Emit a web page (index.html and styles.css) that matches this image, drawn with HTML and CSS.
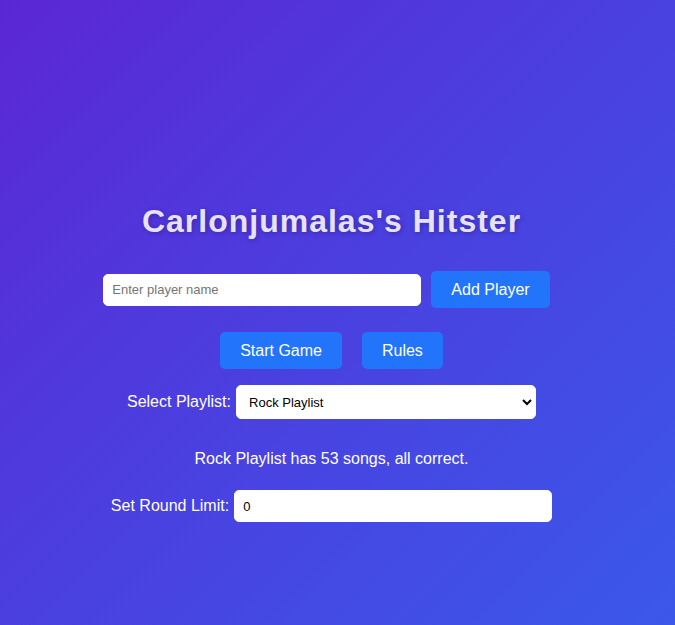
FILE: index.html
```html
<!DOCTYPE html>
<html lang="en">
<head>
<meta charset="utf-8">
<title>Carlonjumalas's Hitster</title>
<link rel="stylesheet" href="styles.css">
</head>
<body>
<div class="page">
  <h1 class="title">Carlonjumalas's Hitster</h1>
  <div class="row row-player">
    <input class="field name-field" type="text" placeholder="Enter player name">
    <button class="btn">Add Player</button>
  </div>
  <div class="row row-actions">
    <button class="btn">Start Game</button>
    <button class="btn">Rules</button>
  </div>
  <div class="row row-playlist">
    <label class="label">Select Playlist:</label>
    <select class="field select-field">
      <option>Rock Playlist</option>
    </select>
  </div>
  <p class="status">Rock Playlist has 53 songs, all correct.</p>
  <div class="row row-limit">
    <label class="label">Set Round Limit:</label>
    <input class="field limit-field" type="number" value="0">
  </div>
</div>
</body>
</html>
```
FILE: styles.css
```css
html, body {
  margin: 0;
  padding: 0;
  height: 100%;
}
body {
  background: linear-gradient(135deg, #5b27d5 0%, #4a40e0 50%, #3b58ea 100%);
  font-family: "Liberation Sans", Arial, sans-serif;
  color: #ffffff;
  overflow: hidden;
}
.page {
  padding: 203px 12px 0 0;
  display: flex;
  flex-direction: column;
  align-items: center;
}
.title {
  margin: 0;
  font-size: 32px;
  line-height: 37px;
  font-weight: bold;
  letter-spacing: 1px;
  color: #e6e2fb;
  text-shadow: 1px 1px 5px rgba(20, 0, 80, 0.35);
}
.row {
  display: flex;
  align-items: center;
  justify-content: center;
}
.row-player { margin-top: 31px; }
.row-actions { margin-top: 24px; }
.row-playlist { margin-top: 16px; }
.row-limit { margin-top: 22px; }
.btn {
  margin: 0 10px;
  padding: 0 20px;
  height: 37px;
  border: none;
  border-radius: 5px;
  background: #2275fb;
  color: #ffffff;
  font-family: "Liberation Sans", Arial, sans-serif;
  font-size: 16px;
}
.field {
  box-sizing: border-box;
  border: 1px solid #ffffff;
  border-radius: 5px;
  background: #ffffff;
  font-family: "Liberation Sans", Arial, sans-serif;
  font-size: 13px;
  color: #000000;
  padding: 0 8px;
  outline: none;
}
.name-field {
  width: 318px;
  height: 32px;
}
.name-field::placeholder { color: #757575; }
.label {
  font-size: 16px;
  margin-right: 5px;
}
.select-field {
  width: 300px;
  height: 34px;
  padding: 0 6px 0 8px;
}
.status {
  margin: 31px 0 0 0;
  font-size: 16px;
  line-height: 18px;
}
.limit-field {
  width: 318px;
  height: 32px;
}
```
